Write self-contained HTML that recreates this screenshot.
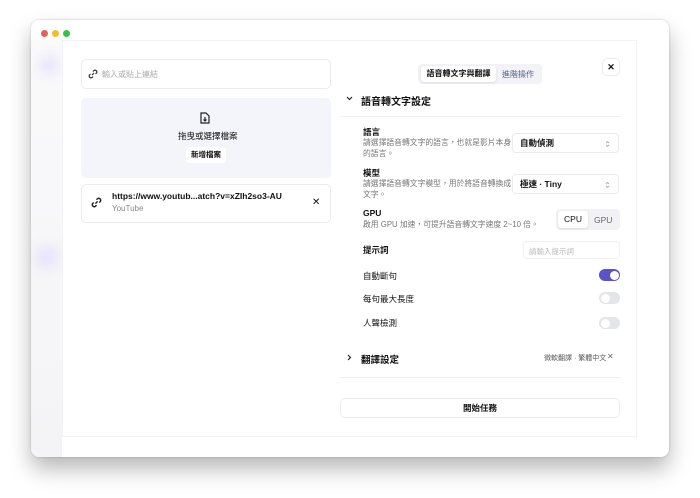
<!DOCTYPE html>
<html><head><meta charset="utf-8"><style>
*{box-sizing:border-box;margin:0;padding:0}
body{width:700px;height:498px;background:#fff;font-family:"Liberation Sans","Noto Sans CJK TC",sans-serif;position:relative;overflow:hidden;color:#111}
.win{position:absolute;left:31px;top:20px;width:638px;height:437px;background:#fff;border-radius:8px;box-shadow:0 12px 22px rgba(0,0,0,.28),0 0 2px rgba(0,0,0,.2);overflow:hidden}
.dot{position:absolute;top:10px;width:7px;height:7px;border-radius:50%}
.side{position:absolute;left:0;top:20px;width:31px;height:417px;background:linear-gradient(#fafafb,#f4f4f7)}
.blob{position:absolute;border-radius:50%;background:#e6e4fa;filter:blur(6px)}
.panel{position:absolute;left:31px;top:20px;width:575px;height:397px;background:#fff;border:1px solid #f2f2f4}
.abs{position:absolute}
.card{position:absolute;border:1px solid #ececf0;border-radius:5px;background:#fff}
.s{font-size:8px}
.muted{color:#888}
.sel{position:absolute;left:512px;width:107px;height:20px;border:1px solid #ececf0;border-radius:4px;font-size:8.5px;font-weight:bold;padding:0 7px;line-height:18px}
.sel svg{position:absolute;right:8px;top:6px}
.lbl{position:absolute;left:363px;font-size:8.5px;font-weight:bold}
.desc{position:absolute;left:363px;font-size:7.8px;color:#777;line-height:11px;width:150px}
.tg{position:absolute;left:599px;width:21px;height:12px;border-radius:6px;background:#e3e5e9}
.tg:after{content:"";position:absolute;left:1.5px;top:1.5px;width:9px;height:9px;border-radius:50%;background:#fff}
.tg.on{background:#5b53c9}.tg.on:after{left:10.5px}
</style></head><body>
<div class="win">
<div class="dot" style="left:10px;background:#ec5f57"></div>
<div class="dot" style="left:21px;background:#f3bc2f"></div>
<div class="dot" style="left:32px;background:#31c546"></div>
<div class="side"><div class="blob" style="left:8px;top:15px;width:20px;height:20px"></div><div class="blob" style="left:4px;top:205px;width:24px;height:24px"></div></div>
</div>
<div class="panel" style="left:62px;top:40px"></div>

<div class="card" style="left:81px;top:59px;width:250px;height:30px"></div>
<svg class="abs" style="left:88px;top:69px" width="10" height="10" viewBox="0 0 10 10" fill="none" stroke="#333" stroke-width="1.2"><path d="M4 6l2-2M5 2.5l1-1a1.8 1.8 0 0 1 2.5 2.5l-1 1M5 7.5l-1 1a1.8 1.8 0 0 1-2.5-2.5l1-1"/></svg>
<div class="abs s muted" style="left:102px;top:69px;color:#aaa">輸入或貼上連結</div>

<div class="abs" style="left:81px;top:98px;width:250px;height:80px;background:#f4f4fb;border-radius:5px"></div>
<svg class="abs" style="left:200px;top:112px" width="10" height="12" viewBox="0 0 10 12" fill="none" stroke="#222" stroke-width="1.2"><path d="M1 1h5l3 3v7H1z"/><path d="M5 5v4M3.5 7.5L5 9l1.5-1.5"/></svg>
<div class="abs" style="left:178px;top:130px;font-size:8.5px">拖曳或選擇檔案</div>
<div class="abs" style="left:186px;top:147px;width:40px;height:16px;background:#fff;border-radius:3px;font-size:7.5px;font-weight:bold;text-align:center;line-height:16px">新增檔案</div>

<div class="card" style="left:81px;top:184px;width:250px;height:39px"></div>
<svg class="abs" style="left:91px;top:197px" width="11" height="11" viewBox="0 0 10 10" fill="none" stroke="#222" stroke-width="1.3"><path d="M4 6l2-2M5 2.5l1-1a1.8 1.8 0 0 1 2.5 2.5l-1 1M5 7.5l-1 1a1.8 1.8 0 0 1-2.5-2.5l1-1"/></svg>
<div class="abs" style="left:112px;top:191px;font-size:8.5px;font-weight:bold">https://www.youtub...atch?v=xZIh2so3-AU</div>
<div class="abs s" style="left:112px;top:204px;color:#888">YouTube</div>
<div class="abs" style="left:312px;top:197px;font-size:10px">✕</div>

<div class="abs" style="left:418px;top:64px;width:124px;height:20px;background:#f2f2f7;border-radius:4px"></div>
<div class="abs" style="left:421px;top:66px;width:75px;height:16px;background:#fff;border-radius:3px;font-size:8px;font-weight:bold;text-align:center;line-height:16px;box-shadow:0 1px 2px rgba(0,0,0,.1)">語音轉文字與翻譯</div>
<div class="abs" style="left:502px;top:69px;font-size:8px;color:#55609a">進階操作</div>
<div class="card" style="left:602px;top:58px;width:18px;height:18px;font-size:9px;text-align:center;line-height:16px;font-weight:bold">✕</div>

<svg class="abs" style="left:346px;top:96px" width="7" height="5" viewBox="0 0 7 5" fill="none" stroke="#222" stroke-width="1.2"><path d="M1 1l2.5 2.5L6 1"/></svg>
<div class="abs" style="left:361px;top:93px;font-size:10px;font-weight:bold">語音轉文字設定</div>
<div class="abs" style="left:340px;top:116px;width:281px;height:1px;background:#f0f0f2"></div>

<div class="lbl" style="top:126px">語言</div>
<div class="desc" style="top:137px">請選擇語音轉文字的語言，也就是影片本身的語言。</div>
<div class="sel" style="top:133px">自動偵測<svg width="5" height="8" viewBox="0 0 5 8" fill="none" stroke="#aaa" stroke-width=".9"><path d="M1 3l1.5-1.5L4 3M1 5l1.5 1.5L4 5"/></svg></div>
<div class="lbl" style="top:167px">模型</div>
<div class="desc" style="top:178px">請選擇語音轉文字模型，用於將語音轉換成文字。</div>
<div class="sel" style="top:174px">極速 · Tiny<svg width="5" height="8" viewBox="0 0 5 8" fill="none" stroke="#aaa" stroke-width=".9"><path d="M1 3l1.5-1.5L4 3M1 5l1.5 1.5L4 5"/></svg></div>
<div class="lbl" style="top:208px">GPU</div>
<div class="desc" style="top:219px;width:200px">啟用 GPU 加速，可提升語音轉文字速度 2~10 倍。</div>
<div class="abs" style="left:556px;top:209px;width:64px;height:21px;background:#f2f2f6;border-radius:4px"></div>
<div class="abs" style="left:558px;top:211px;width:30px;height:17px;background:#fff;border-radius:3px;font-size:8.5px;text-align:center;line-height:17px;box-shadow:0 1px 2px rgba(0,0,0,.1)">CPU</div>
<div class="abs" style="left:594px;top:215px;font-size:8.5px;color:#666">GPU</div>

<div class="lbl" style="top:244px">提示詞</div>
<div class="abs" style="left:523px;top:241px;width:97px;height:18px;border:1px solid #f2f2f4;border-radius:4px;font-size:7.5px;color:#bbb;padding:4px 5px">請輸入提示詞</div>
<div class="lbl" style="top:270px;font-weight:normal">自動斷句</div><div class="tg on" style="top:269px"></div>
<div class="lbl" style="top:293px;font-weight:normal">每句最大長度</div><div class="tg" style="top:292px"></div>
<div class="lbl" style="top:317px;font-weight:normal">人聲檢測</div><div class="tg" style="top:317px"></div>

<svg class="abs" style="left:347px;top:354px" width="5" height="7" viewBox="0 0 5 7" fill="none" stroke="#222" stroke-width="1.2"><path d="M1 1l2.5 2.5L1 6"/></svg>
<div class="abs" style="left:361px;top:352px;font-size:9.5px;font-weight:bold">翻譯設定</div>
<div class="abs" style="left:544px;top:353px;font-size:7px;color:#555">微軟翻譯 · 繁體中文</div>
<div class="abs" style="left:607px;top:352px;font-size:8px;color:#666">✕</div>
<div class="abs" style="left:340px;top:377px;width:281px;height:1px;background:#f0f0f2"></div>

<div class="card" style="left:340px;top:398px;width:280px;height:20px;font-size:8.5px;font-weight:bold;text-align:center;line-height:18px">開始任務</div>
</body></html>
